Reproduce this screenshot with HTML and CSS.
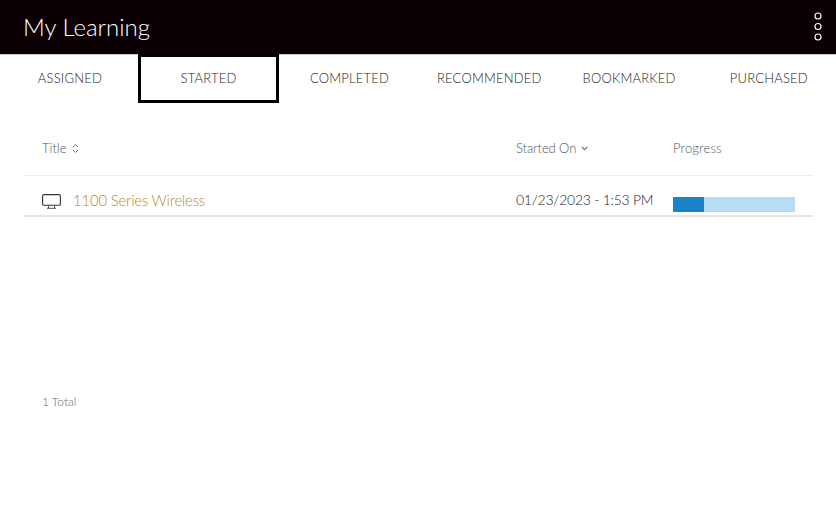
FILE: index.html
```html
<!DOCTYPE html>
<html lang="en">
<head>
<meta charset="utf-8">
<title>My Learning</title>
<link rel="stylesheet" href="styles.css">
</head>
<body>
<header class="topbar">
  <h1 class="title">My Learning</h1>
  <svg class="kebab" width="8" height="29" viewBox="0 0 8 29"><g fill="none" stroke="#fff" stroke-width="1.150"><circle cx="4" cy="4" r="3"/><circle cx="4" cy="14.500" r="3"/><circle cx="4" cy="25" r="3"/></g></svg>
</header>
<nav class="tabs">
  <a class="tab">ASSIGNED</a>
  <a class="tab active">STARTED</a>
  <a class="tab">COMPLETED</a>
  <a class="tab">RECOMMENDED</a>
  <a class="tab">BOOKMARKED</a>
  <a class="tab">PURCHASED</a>
</nav>
<main class="list">
  <div class="row head">
    <div class="c-title">Title
      <svg class="sort" width="7" height="11" viewBox="0 0 7 11"><path d="M1 4 3.500 1.500 6 4M1 7l2.500 2.500L6 7" fill="none" stroke="#777" stroke-width="1"/></svg>
    </div>
    <div class="c-date">Started On
      <svg class="sort" width="7" height="5" viewBox="0 0 7 5"><path d="M.8 1 3.500 3.600 6.200 1" fill="none" stroke="#777" stroke-width="1.200"/></svg>
    </div>
    <div class="c-prog">Progress</div>
  </div>
  <div class="row item">
    <div class="c-title">
      <svg class="monitor" width="19" height="15" viewBox="0 0 19 15"><path d="M2 .6h15a1.400 1.400 0 0 1 1.400 1.400v8.200a1 1 0 0 1-1 1H1.600a1 1 0 0 1-1-1V2A1.400 1.400 0 0 1 2 .6Z" fill="none" stroke="#333" stroke-width="1.100"/><path d="M6.500 11.500v2.500M12.500 11.500v2.500M5 14.300h9" fill="none" stroke="#555" stroke-width="1"/></svg>
      <a class="course">1100 Series Wireless</a>
    </div>
    <div class="c-date date">01/23/2023 - 1:53 PM</div>
    <div class="c-prog"><div class="bar"><div class="fill" style="width:25%"></div></div></div>
  </div>
  <p class="total">1 Total</p>
</main>
</body>
</html>
```
FILE: styles.css
```css
* { box-sizing: border-box; }
html, body { margin: 0; padding: 0; }
body { width: 836px; height: 514px; background: #fff; font-family: Lato, "Open Sans", sans-serif; color: #555; overflow: hidden; }
.topbar { height: 55px; background: #0a0003; display: flex; align-items: center; justify-content: space-between; padding: 0 14px 0 23px; border-bottom: 1px solid #ccc; }
.title { margin: 0 0 2px; color: #fff; font-size: 24px; font-weight: 300; letter-spacing: 0; }
.kebab { flex: none; margin-top: -1px; }
.tabs { display: flex; height: 49px; margin-top: -1px; }
.tab { width: 139.800px; flex: none; display: flex; align-items: center; justify-content: center; padding-bottom: 2px; font-size: 13px; font-weight: 300; color: #222; letter-spacing: .2px; white-space: nowrap; }
.tab.active { border: 3px solid #000; margin-left: -1.600px; margin-right: .6px; width: 140.800px; }
.list { padding: 0 23px 0 24px; }
.row { display: flex; }
.head { height: 73px; padding-top: 36px; border-bottom: 1px solid #eee; font-size: 13px; line-height: 18px; font-weight: 300; color: #555; }
.c-title { width: 492px; padding-left: 18px; display: flex; align-items: flex-start; gap: 5px; }
.c-date { width: 157px; display: flex; align-items: flex-start; gap: 5px; letter-spacing: -.1px; }
.c-prog { width: 140px; letter-spacing: .15px; }
.sort { margin-top: 4px; }
.c-date .sort { margin-top: 7px; }
.item { height: 41px; padding-top: 15px; border-bottom: 2px solid #e4e4e4; }
.item .c-title { gap: 12px; align-items: center; height: 18px; }
.monitor { flex: none; margin-top: 2px; }
.course { color: #b58c1e; font-size: 15px; font-weight: 300; line-height: 18px; letter-spacing: -.22px; white-space: nowrap; }
.date { font-size: 14px; line-height: 18px; font-weight: 300; color: #222; letter-spacing: -.25px; white-space: nowrap; display: block; }
.bar { width: 122px; height: 15px; margin-top: 6px; background: #b7dcf6; }
.fill { height: 100%; background: #1a82c8; }
.total { margin: 0; padding-top: 177px; padding-left: 18px; font-size: 12px; line-height: 16px; font-weight: 300; color: #6f5f88; }
```
